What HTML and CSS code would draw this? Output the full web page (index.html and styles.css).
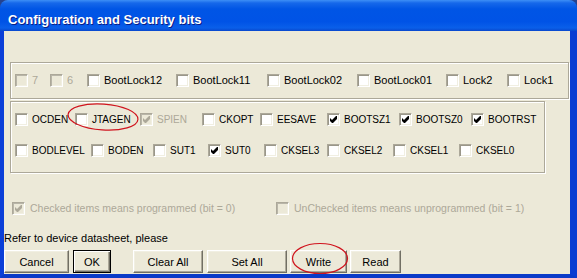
FILE: index.html
```html
<!DOCTYPE html>
<html lang="en">

<head>
    <meta charset="UTF-8">
    <title>Configuration and Security bits</title>
    <link rel="stylesheet" href="styles.css">
</head>

<body>
    <div class="window">
        <div class="titlebar">Configuration and Security bits</div>

        <div class="client">
            <!-- lock bits -->
            <div class="group group-lock">
                <div class="row row-lock">
                    <label class="item disabled"><span class="cb"></span>7</label>
                    <label class="item disabled"><span class="cb"></span>6</label>
                    <label class="item"><span class="cb"></span>BootLock12</label>
                    <label class="item"><span class="cb"></span>BootLock11</label>
                    <label class="item"><span class="cb"></span>BootLock02</label>
                    <label class="item"><span class="cb"></span>BootLock01</label>
                    <label class="item"><span class="cb"></span>Lock2</label>
                    <label class="item"><span class="cb"></span>Lock1</label>
                </div>
            </div>

            <!-- fuse bits -->
            <div class="group group-fuse">
                <div class="row row-fuse1">
                    <label class="item"><span class="cb"></span>OCDEN</label>
                    <label class="item"><span class="cb"></span>JTAGEN</label>
                    <label class="item disabled"><span class="cb checked"><svg viewBox="0 0 7 7"><polygon points="0,2 2,4 6,0 7,0 7,3 3,7 2,7 0,5"/></svg></span>SPIEN</label>
                    <label class="item"><span class="cb"></span>CKOPT</label>
                    <label class="item"><span class="cb"></span>EESAVE</label>
                    <label class="item"><span class="cb checked"><svg viewBox="0 0 7 7"><polygon points="0,2 2,4 6,0 7,0 7,3 3,7 2,7 0,5"/></svg></span>BOOTSZ1</label>
                    <label class="item"><span class="cb checked"><svg viewBox="0 0 7 7"><polygon points="0,2 2,4 6,0 7,0 7,3 3,7 2,7 0,5"/></svg></span>BOOTSZ0</label>
                    <label class="item"><span class="cb checked"><svg viewBox="0 0 7 7"><polygon points="0,2 2,4 6,0 7,0 7,3 3,7 2,7 0,5"/></svg></span>BOOTRST</label>
                </div>
                <div class="row row-fuse2">
                    <label class="item"><span class="cb"></span>BODLEVEL</label>
                    <label class="item"><span class="cb"></span>BODEN</label>
                    <label class="item"><span class="cb"></span>SUT1</label>
                    <label class="item"><span class="cb checked"><svg viewBox="0 0 7 7"><polygon points="0,2 2,4 6,0 7,0 7,3 3,7 2,7 0,5"/></svg></span>SUT0</label>
                    <label class="item"><span class="cb"></span>CKSEL3</label>
                    <label class="item"><span class="cb"></span>CKSEL2</label>
                    <label class="item"><span class="cb"></span>CKSEL1</label>
                    <label class="item"><span class="cb"></span>CKSEL0</label>
                </div>
            </div>

            <div class="legend">
                <label class="item disabled legend-first"><span class="cb checked"><svg viewBox="0 0 7 7"><polygon points="0,2 2,4 6,0 7,0 7,3 3,7 2,7 0,5"/></svg></span>Checked items means programmed (bit = 0)</label>
                <label class="item disabled"><span class="cb"></span>UnChecked items means unprogrammed (bit = 1)</label>
            </div>

            <div class="note">Refer to device datasheet, please</div>

            <div class="buttons">
                <button class="btn btn-cancel">Cancel</button>
                <button class="btn btn-ok default">OK</button>
                <button class="btn btn-clear">Clear All</button>
                <button class="btn btn-set">Set All</button>
                <button class="btn btn-write">Write</button>
                <button class="btn btn-read">Read</button>
            </div>
        </div>

        <!-- hand-drawn annotation circles -->
        <svg class="marks" width="577" height="278" viewBox="0 0 577 278">
            <ellipse cx="103" cy="117" rx="35" ry="13" transform="rotate(4 103 117)"/>
            <ellipse cx="320" cy="258.5" rx="27.5" ry="15"/>
        </svg>
    </div>
</body>

</html>
```

FILE: styles.css
```css
body {
    margin: 0;
    background: #24428f;
    font-family: "Liberation Sans", Arial, sans-serif;
    font-size: 11px;
    color: #000;
}

.window {
    position: relative;
    width: 577px;
    height: 278px;
    display: flex;
    flex-direction: column;
    overflow: hidden;
}

.titlebar {
    height: 31px;
    box-sizing: border-box;
    padding: 12px 0 0 8px;
    line-height: 16px;
    border-radius: 8px 8px 0 0;
    background: linear-gradient(#3d8ff6 0, #1668ea 3px, #0055e5 9px, #0053e6 70%, #0a5fe9 90%, #0847cd 100%);
    color: #fff;
    font-size: 13px;
    font-weight: bold;
    text-shadow: 1px 1px 0 #0a1d86;
}

.client {
    flex: 1;
    background: #ece9d8;
    border-left: 4px solid #0b3fd8;
    border-right: 7px solid #0a3cd2;
    border-bottom: 4px solid #0a3ac8;
    padding-top: 31px;
}

.group {
    box-sizing: border-box;
    margin-left: 6px;
    padding: 9px 0 0 4px;
    border: 1px solid #aca899;
    box-shadow: inset 1px 1px 0 #fff, 1px 1px 0 #fff;
}

.group-lock {
    width: 559px;
    height: 37px;
}

.group-fuse {
    width: 535px;
    height: 72px;
    margin-top: 2px;
    font-size: 10px;
}

.row {
    display: grid;
    height: 16px;
    align-items: center;
}

.row-lock {
    grid-template-columns: 35px 37px 89px 91px 90px 89px 61px auto;
}

.row-fuse1 {
    grid-template-columns: 60px 65px 62px 58px 67px 72px 72px auto;
}

.row-fuse2 {
    grid-template-columns: 76px 62px 55px 56px 63px 66px 66px auto;
    margin-top: 15px;
}

.item {
    display: flex;
    align-items: center;
    gap: 4px;
    white-space: nowrap;
}

.item.disabled {
    color: #aca899;
}

.cb {
    display: flex;
    align-items: center;
    justify-content: center;
    flex: none;
    box-sizing: border-box;
    width: 13px;
    height: 13px;
    background: #fff;
    border: 1px solid;
    border-color: #aca899 #fff #fff #aca899;
    box-shadow: inset 1px 1px 0 #9a978a, inset -1px -1px 0 #f1efe2;
}

.disabled .cb {
    background: #ece9d8;
    box-shadow: inset 1px 1px 0 #b8b5a8, inset -1px -1px 0 #f1efe2;
}

.cb svg {
    width: 7px;
    height: 7px;
    fill: #000;
}

.disabled .cb svg {
    fill: #aca899;
}

.legend {
    display: flex;
    height: 16px;
    align-items: center;
    margin: 27px 0 0 8px;
    font-size: 10.5px;
}

.legend .item {
    gap: 5px;
}

.legend-first {
    width: 264px;
}

.note {
    margin-top: 15px;
    line-height: 14px;
}

.buttons {
    display: flex;
    margin-top: 5px;
}

.btn {
    box-sizing: border-box;
    height: 23px;
    padding: 0;
    font-family: "Liberation Sans", Arial, sans-serif;
    font-size: 11px;
    color: #000;
    background: #ece9d8;
    border: 1px solid;
    border-color: #fff #716f64 #716f64 #fff;
    box-shadow: inset -1px -1px 0 #aca899, inset 1px 1px 0 #f1efe2;
}

.btn.default {
    border-color: #000;
    box-shadow: inset 1px 1px 0 #fff, inset -1px -1px 0 #716f64, inset -2px -2px 0 #aca899;
}

.btn-cancel { width: 65px; }
.btn-ok { width: 38px; margin-left: 4px; }
.btn-clear { width: 70px; margin-left: 22px; }
.btn-set { width: 80px; margin-left: 4px; }
.btn-write { width: 57px; margin-left: 3px; }
.btn-read { width: 51px; margin-left: 3px; }

.marks {
    position: absolute;
    left: 0;
    top: 0;
    pointer-events: none;
}

.marks ellipse {
    fill: none;
    stroke: #d0141e;
    stroke-width: 1.2;
}
```
